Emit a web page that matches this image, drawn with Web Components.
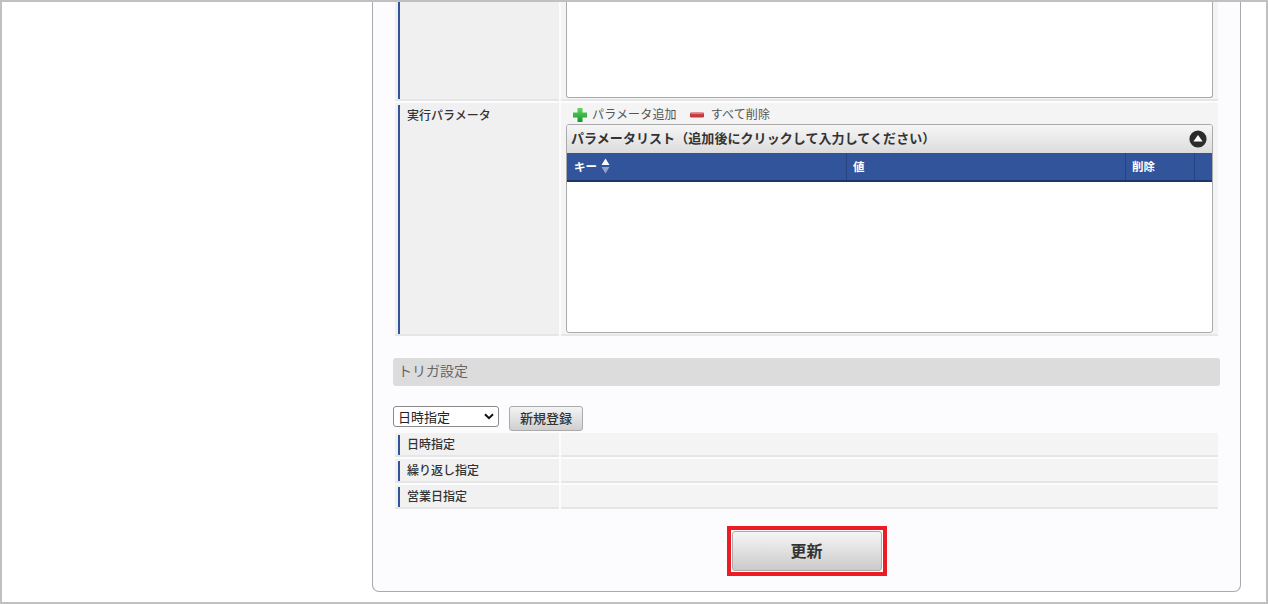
<!DOCTYPE html>
<html lang="ja"><head><meta charset="utf-8"><style>
html,body{margin:0;padding:0;background:#fff}
body{font-family:"Noto Sans CJK JP","Noto Sans",sans-serif;font-size:12px;color:#333}
</style></head><body>
<app-frame></app-frame>
<script>
const F='"Noto Sans CJK JP","Noto Sans",sans-serif';
function def(name,css,html){
  customElements.define(name,class extends HTMLElement{
    connectedCallback(){
      if(this.shadowRoot)return;
      const r=this.attachShadow({mode:'open'});
      r.innerHTML='<style>'+css+'</style>'+(typeof html==='function'?html(this):html);
    }
  });
}
def('im-row',`
:host{display:grid;grid-template-columns:164px 657px;column-gap:2px;margin-left:2px;width:823px;height:var(--h);margin-bottom:var(--mb,2px);font-family:${F}}
.l{background:var(--lbg,#f0f0f0);border-bottom:var(--bb,2px) solid #e6e6e6;padding:var(--pt,2px) 0 var(--pb,0) 3px;display:flex;box-sizing:border-box;min-height:0}
.bar{width:2px;background:#32549b;display:flex;flex:none}
.t{font-size:12px;font-weight:500;color:#333;padding:var(--tp,1px) 0 0 7px;line-height:18px;white-space:nowrap}
.v{background:#f4f4f4;border-bottom:var(--bb,2px) solid #e6e6e6;box-sizing:border-box;min-height:0;padding:var(--vp,0 5px)}
`,h=>`<div class="l"><div class="bar"></div><div class="t">${h.getAttribute('label')||''}</div></div><div class="v"><slot></slot></div>`);
def('im-link',`
:host{display:inline-flex;align-items:center;height:18px;font-size:12px;letter-spacing:.15px;color:#555;font-family:${F};white-space:nowrap}
svg{display:block;margin-right:var(--g,5px)}
span{display:block;margin-bottom:2px}
`,h=>(h.getAttribute('kind')==='add'
 ?`<svg width="14" height="14" viewBox="0 0 14 14"><defs><linearGradient id="g" x1="0" y1="0" x2="0" y2="1"><stop offset="0" stop-color="#62d862"/><stop offset="1" stop-color="#169428"/></linearGradient></defs><path d="M4.5 0h5v4.5H14v5H9.5V14h-5V9.5H0v-5h4.5z" fill="url(#g)"/></svg>`
 :`<svg width="14" height="14" viewBox="0 0 14 14"><rect x="0" y="4.5" width="14" height="5" rx="1.2" fill="#c8383c"/><rect x="1" y="5" width="12" height="1.2" fill="#dd7a7a"/></svg>`)+'<span><slot></slot></span>');
def('im-list',`
:host{display:block;height:209px;box-sizing:border-box;border:1px solid #aaa;border-radius:3px;background:#fff;font-family:${F};overflow:hidden}
.h{height:28px;display:flex;align-items:center;justify-content:space-between;padding:0 5px 0 4px;background:linear-gradient(#f6f6f6,#dcdcdc);font-size:13px;letter-spacing:.07px;font-weight:700;color:#333;white-space:nowrap}
.h span{margin-bottom:4px}
.c{width:18px;height:18px;display:block}
.th{height:29px;box-sizing:border-box;background:#32549b;border-bottom:2px solid #1d3568;display:grid;grid-template-columns:280px 279px 69px 1fr;color:#fff;font-size:11.5px;font-weight:700}
.th>div{display:flex;align-items:center;padding:0 0 2px 6px;border-right:1px solid #264383;gap:4px;box-sizing:border-box}
.th>div:first-child{padding-left:7px}
.th>div:last-child{border:0}
svg.s{display:block}
`,`<div class="h"><span>パラメータリスト（追加後にクリックして入力してください）</span><svg class="c" viewBox="0 0 18 18"><circle cx="9" cy="9" r="8.6" fill="#2b2b2b"/><path d="M9 5l4.6 6.5H4.4z" fill="#fff"/></svg></div>
<div class="th"><div>キー<svg class="s" width="9" height="16" viewBox="0 0 9 16"><path d="M4.5 0.5L8.5 7H.5z" fill="#fff"/><path d="M4.5 15.5L8.5 9H.5z" fill="#8fa3cc"/></svg></div><div>値</div><div>削除</div><div></div></div>`);
def('im-btn',`
:host{display:inline-flex;align-items:center;justify-content:center;box-sizing:border-box;width:74px;height:25px;padding-bottom:2px;border:1px solid #aaa;border-radius:3px;background:linear-gradient(#f4f4f4,#cfcfcf);font-size:13px;font-weight:500;color:#333;font-family:${F}}
`,'<slot></slot>');
def('im-select',`
:host{display:block;width:106px;height:21px;font-family:${F}}
.s{box-sizing:border-box;width:106px;height:21px;border:1px solid #8a8a8a;border-radius:3px;background:#fff;display:flex;align-items:center;justify-content:space-between;padding:0 4px 0 4px;font-size:13px;color:#222}
`,`<div class="s"><span>日時指定</span><svg width="10" height="7" viewBox="0 0 10 7"><path d="M1 1.2L5 5.2L9 1.2" fill="none" stroke="#111" stroke-width="2"/></svg></div>`);
def('im-update',`
:host{display:flex;justify-content:center;margin-top:17px;font-family:${F}}
.r{box-sizing:border-box;width:160px;height:50px;border:4px solid #ed1c24;padding:1px;background:#fff}
.b{box-sizing:border-box;height:40px;width:150px;padding-bottom:2px;border:1px solid #aaa;border-radius:3px;background:linear-gradient(#f5f5f5,#cbcbcb);display:flex;align-items:center;justify-content:center;font-size:16px;font-weight:700;color:#333}
`,'<div class="r"><div class="b"><slot></slot></div></div>');
def('im-section',`
:host{display:flex;align-items:center;box-sizing:border-box;height:28px;margin:22px 0 20px;padding:0 0 4px 5px;background:#dcdcdc;border-radius:3px;font-size:14px;color:#666;font-family:${F}}
`,'<slot></slot>');
def('app-frame',`
:host{display:block;box-sizing:border-box;width:1268px;height:604px;border:2px solid #c0c0c0;background:#fff;overflow:hidden;font-family:${F}}
.wrap{display:flex;height:589px;padding-left:370px;box-sizing:border-box}
.p{box-sizing:border-box;width:869px;height:590px;border:1px solid #aaa;border-top:0;border-radius:0 0 7px 7px;background:#fcfcff;padding:0 20px}
.ta{box-sizing:border-box;height:96px;border:1px solid #aaa;border-top:0;border-radius:0 0 3px 3px;background:#fff}
.tools{display:flex;gap:13px;height:19px;align-items:center;padding-left:7px}
.ctrl{display:flex;gap:10px;height:27px}
.del{--g:7px}
`,`<div class="wrap"><div class="p">
<im-row style="--h:99px;--mb:2px;--pt:0;--vp:0 5px"><div class="ta"></div></im-row>
<im-row label="実行パラメータ" style="--h:233px;--mb:0;--vp:2px 5px 0;--pt:2px">
  <div class="tools"><im-link kind="add">パラメータ追加</im-link><im-link kind="del" class="del">すべて削除</im-link></div>
  <im-list></im-list>
</im-row>
<im-section>トリガ設定</im-section>
<div class="ctrl"><im-select></im-select><im-btn>新規登録</im-btn></div>
<im-row label="日時指定" style="--h:24px;--lbg:#f1f1f1;--tp:0"></im-row>
<im-row label="繰り返し指定" style="--h:24px;--lbg:#f1f1f1;--tp:0"></im-row>
<im-row label="営業日指定" style="--h:24px;--mb:0;--lbg:#f1f1f1;--tp:0"></im-row>
<im-update>更新</im-update>
</div></div>`);
</script>
</body></html>
